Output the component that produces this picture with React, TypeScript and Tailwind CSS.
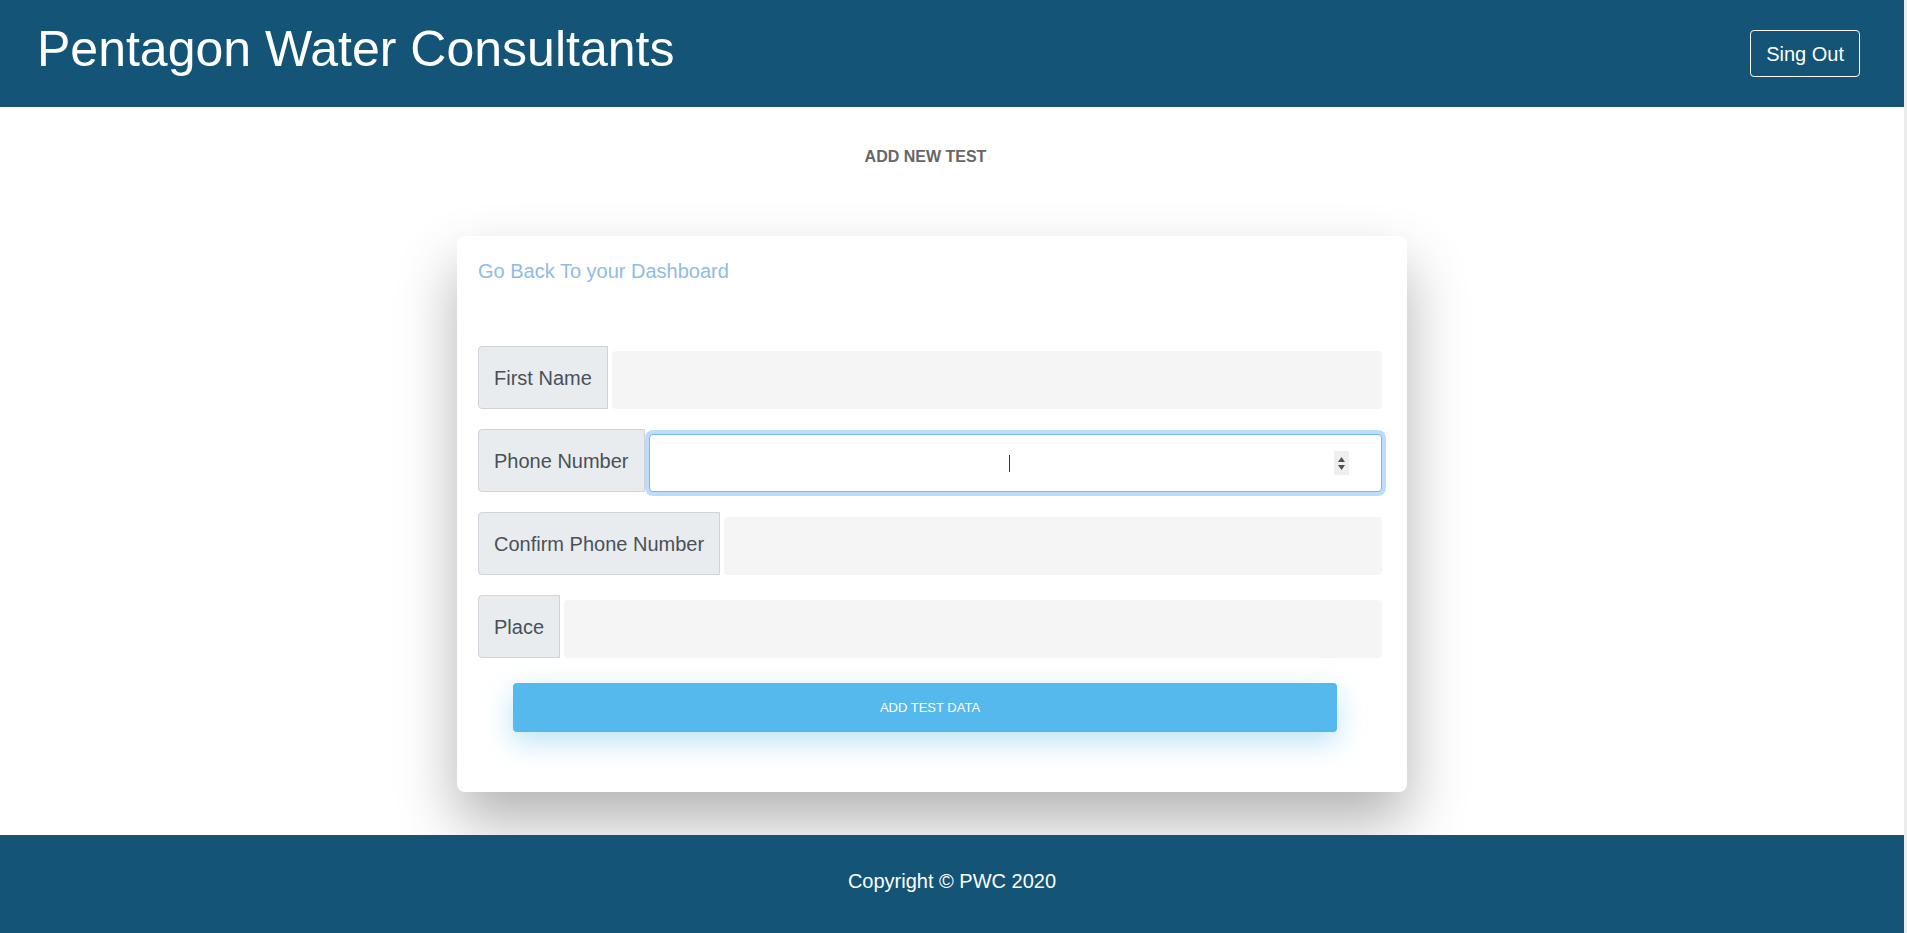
import type { ReactNode } from "react";

const fields = [
  { label: "First Name", focused: false },
  { label: "Phone Number", focused: true },
  { label: "Confirm Phone Number", focused: false },
  { label: "Place", focused: false },
];

function InputRow({ label, focused }: { label: string; focused: boolean }) {
  return (
    <div className="flex items-end gap-[4px]">
      <span className="flex h-[63px] shrink-0 items-center rounded-l-[4px] border border-[#ced4da] bg-[#e9ecef] px-[15px] text-[20px] leading-[30px] text-[#495057]">
        {label}
      </span>
      {focused ? (
        <div className="relative h-[58px] flex-1">
          <input
            type="text"
            aria-label={label}
            className="h-full w-full rounded-[4px] border border-[#78baf0] bg-white px-3 text-center text-[20px] text-[#495057] caret-transparent shadow-[0_0_0_4px_#bddcfb] outline-none"
          />
          <span className="pointer-events-none absolute left-[360px] top-[21px] h-[17px] w-px bg-[#333]" />
          <span className="pointer-events-none absolute right-[33px] top-[17px] flex h-[24px] w-[15px] flex-col items-center justify-center gap-[3px] bg-[#efefef]">
            <svg width="7" height="5" viewBox="0 0 7 5">
              <path d="M3.5 0 7 5H0z" fill="#505050" />
            </svg>
            <svg width="7" height="5" viewBox="0 0 7 5">
              <path d="M0 0h7L3.5 5z" fill="#505050" />
            </svg>
          </span>
        </div>
      ) : (
        <input
          type="text"
          aria-label={label}
          className="h-[58px] flex-1 rounded-[4px] bg-[#f5f5f5] px-3 text-[20px] text-[#495057] outline-none"
        />
      )}
    </div>
  );
}

function Card({ children }: { children: ReactNode }) {
  return (
    <div className="ml-[457px] w-[950px] rounded-[8px] bg-white pb-[60px] pl-[21px] pr-[25px] pt-[20px] shadow-[0_30px_60px_rgba(0,0,0,0.3)]">
      {children}
    </div>
  );
}

export default function App() {
  return (
    <div className="flex font-['Liberation_Sans',Arial,sans-serif]">
      <div className="w-[1904px] shrink-0">
        <header className="flex h-[107px] items-start justify-between bg-[#135477] pl-[37px] pr-[44px]">
          <h1 className="mt-[24px] text-[50px] leading-[50px] text-white">Pentagon Water Consultants</h1>
          <button
            type="button"
            className="mt-[30px] h-[47px] rounded-[4px] border border-white px-[15px] text-[20px] leading-[30px] text-white"
          >
            Sing Out
          </button>
        </header>

        <main className="bg-white pb-[43px] pt-[38px]">
          <p className="w-[1851px] text-center text-[16px] font-bold leading-[24px] text-[#666]">ADD NEW TEST</p>
          <div className="mt-[67px]">
            <Card>
              <a href="#" className="block text-[20px] leading-[30px] text-[#8fbce6]">
                Go Back To your Dashboard
              </a>
              <form className="mt-[60px] flex flex-col gap-[20px]" onSubmit={(event) => event.preventDefault()}>
                {fields.map((field) => (
                  <InputRow key={field.label} label={field.label} focused={field.focused} />
                ))}
              </form>
              <button
                type="button"
                className="ml-[35px] mt-[25px] h-[49px] w-[824px] rounded-[4px] bg-[#56b9ed] pl-[10px] text-[13px] uppercase text-white shadow-[0_10px_28px_rgba(86,185,237,0.4)]"
              >
                Add Test Data
              </button>
            </Card>
          </div>
        </main>

        <footer className="relative h-[98px] bg-[#135477] pt-[31px] text-center text-[20px] leading-[30px] text-white">
          Copyright © PWC 2020
        </footer>
      </div>
      <div className="w-[3px] shrink-0 bg-[#ececec]" />
    </div>
  );
}
